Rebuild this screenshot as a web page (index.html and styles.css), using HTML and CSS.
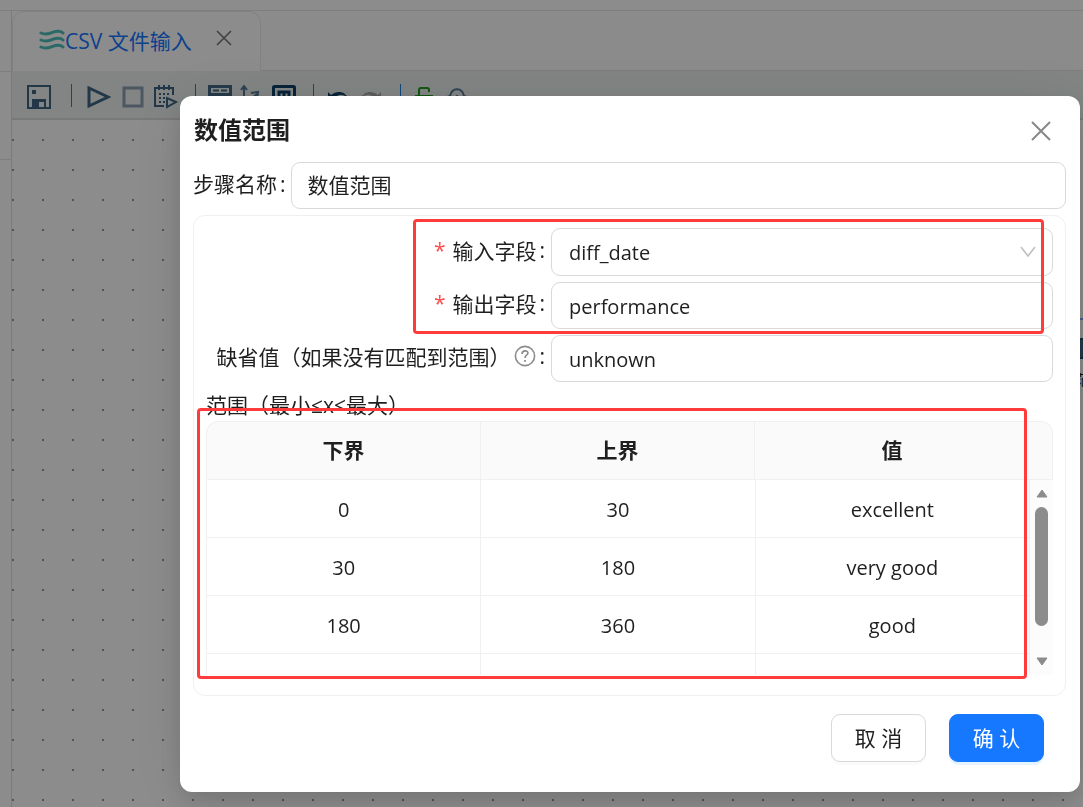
FILE: index.html
```html
<!DOCTYPE html>
<html lang="zh-CN">
<head>
  <meta charset="UTF-8">
  <meta name="viewport" content="width=device-width, initial-scale=1.0">
  <title>数值范围</title>
  <link rel="stylesheet" href="styles.css">
</head>
<body>
  <div class="page">
    <div class="topbar"></div>
    <div class="workspace">
      <aside class="sidebar">
        <div class="side-head"></div>
        <div class="side-item"></div>
      </aside>
      <main class="editor">
        <div class="tabs">
          <div class="tab">
            <svg width="26" height="22" viewBox="0 0 26 22" fill="none" stroke="#4ebfb9" stroke-width="3" stroke-linecap="round"><path d="M2 4c4 2 7 1 10 0s8-4 12 0M2 11c4 2 7 1 10 0s8-4 12 0M2 18c4 2 7 1 10 0s8-4 12 0"/></svg>
            <a href="#">CSV 文件输入</a>
            <button class="tab-close" aria-label="关闭标签"><svg width="16" height="16" viewBox="0 0 16 16" stroke="#777" stroke-width="1.6"><path d="M1 1l14 14M15 1L1 15"/></svg></button>
          </div>
          <div class="tabs-rest"></div>
        </div>
        <div class="toolbar">
          <button aria-label="保存"><svg width="24" height="24" viewBox="0 0 24 24"><path fill="#3e6684" fill-rule="evenodd" d="M0 0h24v24H0zM2 2v20h3v-8h14v8h3V2zM12 17v5h5v-5zM5 5h4v4H5z"/></svg></button>
          <i class="sep sep-first"></i>
          <button class="run" aria-label="运行"><svg width="24" height="24" viewBox="0 0 24 24" fill="none" stroke="#3e6684" stroke-width="3"><path d="M2 3v18l19-9z"/></svg></button>
          <button class="stop" aria-label="停止"><svg width="22" height="22" viewBox="0 0 22 22" fill="none" stroke="#8a9fb2" stroke-width="3"><path d="M2 2h18v18H2z"/></svg></button>
          <button class="plan" aria-label="调度"><svg width="24" height="24" viewBox="0 0 24 24" fill="none" stroke="#3e6684" stroke-width="2"><path d="M10 21H1V3h18v7M5 0v5M10 0v5M15 0v5"/><path d="M5 9h2m2 0h2m2 0h2M5 13h2m2 0h2M5 17h2m2 0h2"/><path d="M13 13v9l9-5z"/></svg></button>
          <i class="sep"></i>
          <button class="align" aria-label="对齐"><svg width="24" height="24" viewBox="0 0 24 24" fill="none" stroke="#456a88" stroke-width="3"><path d="M1.500 1.500h21v8h-21zM1.500 14.500h21v8h-21z"/><path d="M5 5.500h6M13 5.500h6" stroke-width="2"/></svg></button>
          <button class="route" aria-label="连线"><svg width="24" height="24" viewBox="0 0 24 24" fill="none" stroke="#56799a" stroke-width="2"><path d="M4 2v20M1 5l3-4 3 4M4 20l13-11M11 8l7-1-1 7"/></svg></button>
          <button class="map" aria-label="缩略图"><svg width="24" height="24" viewBox="0 0 24 24" fill="none" stroke="#0f4168" stroke-width="3"><rect x="1.500" y="1.500" width="21" height="21" rx="1"/><path d="M7 18V7h10v11M12 7v9"/></svg></button>
          <i class="sep"></i>
          <button class="undo" aria-label="撤销"><svg width="24" height="24" viewBox="0 0 24 24" fill="#0f4168"><path d="M2 7l3 3c6-5 14-4 17 3-5-4-9-4-12-1l3 4H2z"/></svg></button>
          <button class="redo" aria-label="重做"><svg width="24" height="24" viewBox="0 0 24 24" fill="#aaa"><path d="M22 7l-3 3C13 5 5 6 2 13c5-4 9-4 12-1l-3 4h11z"/></svg></button>
          <i class="sep"></i>
          <button class="unlock" aria-label="解锁"><svg width="24" height="24" viewBox="0 0 24 24" fill="none" stroke="#20a020" stroke-width="2"><path d="M3 11h16v11H3zM6 11V5q0-2 2-2h6q2 0 2 2v2"/></svg></button>
          <button class="cloud" aria-label="上传"><svg width="26" height="24" viewBox="0 0 26 24" fill="none" stroke="#56799a" stroke-width="2"><path d="M7 21H5c-5-1-5-9 1-10C8 2 18 2 20 11c6 1 6 9 1 10h-2M13 22V11M9 15l4-4 4 4"/></svg></button>
        </div>
        <div class="canvas">
          <div class="node"><i class="node-icon"></i><span>范围</span></div>
        </div>
      </main>
    </div>
  </div>

  <div class="mask">
    <form class="modal" role="dialog" aria-labelledby="title" onsubmit="return false">
      <header class="modal-head">
        <h1 id="title">数值范围</h1>
        <button type="button" class="modal-close" aria-label="关闭"><svg width="20" height="20" viewBox="0 0 20 20" stroke="#888" stroke-width="2"><path d="M1 1l18 18M19 1L1 19"/></svg></button>
      </header>
      <div class="name-row">
        <label for="stepName">步骤名称<span class="colon">:</span></label>
        <input class="field" type="text" id="stepName" value="数值范围">
      </div>
      <section class="panel">
        <div class="form-grid">
          <label for="inField"><span class="req">*</span>输入字段<span class="colon">:</span></label>
          <div class="select-wrap">
            <select class="field" id="inField"><option>diff_date</option></select>
            <svg class="arrow" width="16" height="12" viewBox="0 0 16 12" fill="none" stroke="#bfbfbf" stroke-width="1.6"><path d="M1 1l7 9 7-9"/></svg>
          </div>
          <label for="outField"><span class="req">*</span>输出字段<span class="colon">:</span></label>
          <input class="field" type="text" id="outField" value="performance">
          <label for="defValue">缺省值（如果没有匹配到范围）
            <svg class="help" width="22" height="22" viewBox="0 0 22 22" fill="none" stroke="#8c8c8c" stroke-width="1.6"><circle cx="11" cy="11" r="9.600"/><path d="M8 9c0-4 6-4 6-1 0 2-3 2-3 5"/><path d="M11 15v2"/></svg><span class="colon">:</span></label>
          <input class="field" type="text" id="defValue" value="unknown">
        </div>
        <p class="range-title">范围（最小≤x&lt;最大）</p>
        <div class="range">
          <table class="range-head">
            <thead><tr><th>下界</th><th>上界</th><th>值</th><th class="gutter"></th></tr></thead>
          </table>
          <div class="range-body">
            <table>
              <tbody>
                <tr><td>0</td><td>30</td><td>excellent</td></tr>
                <tr><td>30</td><td>180</td><td>very good</td></tr>
                <tr><td>180</td><td>360</td><td>good</td></tr>
                <tr><td></td><td></td><td></td></tr>
              </tbody>
            </table>
            <div class="scrollbar">
              <svg width="12" height="9" viewBox="0 0 12 9" fill="#8c8c8c" stroke="#8c8c8c" stroke-linejoin="round"><path d="M6 1l5 7H1z"/></svg>
              <div class="thumb"></div>
              <svg class="down" width="12" height="9" viewBox="0 0 12 9" fill="#8c8c8c" stroke="#8c8c8c" stroke-linejoin="round"><path d="M6 8L1 1h10z"/></svg>
            </div>
          </div>
        </div>
        <div class="mark mark-fields"></div>
        <div class="mark mark-range"></div>
      </section>
      <footer class="modal-foot">
        <button type="button" class="btn">取 消</button>
        <button type="submit" class="btn btn-primary">确 认</button>
      </footer>
    </form>
  </div>
</body>
</html>
```
FILE: styles.css
```css
* {
  box-sizing: border-box;
}
body {
  margin: 0;
  font-family: "Open Sans", "Noto Sans CJK SC", sans-serif;
  font-size: 21px;
  color: #1f1f1f;
}
button, input, select {
  font: inherit;
  color: inherit;
}
button {
  padding: 0;
  border: none;
  background: none;
  cursor: pointer;
}
svg {
  display: block;
}

/* page behind the dialog */
.page {
  display: flex;
  flex-direction: column;
  height: 100vh;
  overflow: hidden;
}
.topbar {
  height: 11px;
  border-bottom: 1px solid #e6e6e6;
}
.workspace {
  display: flex;
  flex: 1;
}
.sidebar {
  width: 12px;
  border-right: 1px solid #e0e0e0;
}
.side-head {
  height: 61px;
  border-bottom: 1px solid #e6e6e6;
}
.side-item {
  height: 88px;
  border-bottom: 1px solid #e6e6e6;
}
.editor {
  display: flex;
  flex: 1;
  flex-direction: column;
}
.tabs {
  display: flex;
  height: 60px;
}
.tab {
  display: flex;
  align-items: center;
  width: 249px;
  padding: 0 0 4px 26px;
  border: 1px solid #ececec;
  border-bottom: none;
  border-radius: 12px 12px 0 0;
}
.tab a {
  color: #1677ff;
  text-decoration: none;
}
.tab-close {
  margin: 0 0 4px 24px;
}
.tabs-rest {
  flex: 1;
  border-bottom: 1px solid #e6e6e6;
  background: #fdfdfd;
}
.toolbar {
  display: flex;
  align-items: center;
  height: 49px;
  padding: 4px 0 0 15px;
  background: #edf3f1;
  border-bottom: 2px solid #ddd;
}
.sep {
  width: 1px;
  height: 23px;
  margin: 0 12px 3px 17px;
  background: #1c84e0;
}
.sep-first {
  margin: 0 15px 3px 20px;
}
.stop {
  margin-left: 11px;
}
.plan {
  margin-left: 10px;
}
.route, .map {
  margin-left: 8px;
}
.redo {
  margin-left: 9px;
}
.cloud {
  margin-left: 7px;
}
.canvas {
  position: relative;
  flex: 1;
  background: radial-gradient(circle, #999 1px, transparent 1px) 16px 5px / 30px 30px;
}
.node {
  position: absolute;
  top: 198px;
  left: 1064px;
  width: 80px;
  border-top: 2px solid #7fa8ff;
  font-size: 14px;
}
.node-icon {
  display: block;
  width: 24px;
  height: 21px;
  margin: 18px 0 10px;
  border: 2px solid #1c4a6c;
  background: #3e6684;
}

/* dialog */
.mask {
  position: fixed;
  inset: 0;
  padding: 96px 3px 15px 180px;
  background: rgba(0, 0, 0, 0.45);
}
.modal {
  padding: 14px 14px 14px 13px;
  border-radius: 12px;
  background: #fff;
  box-shadow: 0 9px 24px rgba(0, 0, 0, 0.12), 0 4px 60px rgba(0, 0, 0, 0.1);
}
.modal-head {
  display: flex;
  align-items: center;
  justify-content: space-between;
  height: 42px;
  padding: 0 15px 0 1px;
}
.modal-head h1 {
  margin: 0;
  padding-bottom: 5px;
  font-size: 24px;
}
.name-row {
  display: flex;
  align-items: center;
  gap: 5px;
  margin-top: 10px;
}
.name-row label {
  padding-bottom: 5px;
}
.colon {
  margin-left: 3px;
}
.field {
  width: 100%;
  height: 47px;
  padding: 0 16px;
  border: 1px solid #d9d9d9;
  border-radius: 9px;
  background: #fff;
  font-size: 20px;
}
.name-row .field {
  flex: 1;
  width: auto;
  padding-bottom: 3px;
  font-size: 21px;
}
.panel {
  position: relative;
  margin-top: 6px;
  padding: 12px 12px 20px;
  border: 1px solid #f0f0f0;
  border-radius: 12px;
}
.form-grid {
  display: grid;
  grid-template-columns: 339px 1fr;
  gap: 6px;
  align-items: center;
}
.form-grid label {
  display: flex;
  align-items: center;
  justify-content: flex-end;
  padding-bottom: 5px;
  white-space: nowrap;
}
.form-grid .field {
  padding: 1px 17px 0;
}
.req {
  margin-right: 7px;
  color: #ff4d4f;
}
.help {
  margin-left: 4px;
}
.select-wrap {
  position: relative;
}
.select-wrap .field {
  display: block;
  height: 48px;
  appearance: none;
}
.arrow {
  position: absolute;
  top: 18px;
  right: 17px;
  pointer-events: none;
}
.range-title {
  margin: 8px 0 0;
  line-height: 31px;
}
.range-head, .range-body table {
  width: 100%;
  table-layout: fixed;
  border-collapse: separate;
  border-spacing: 0;
  text-align: center;
}
.range-head {
  border: 1px solid #f0f0f0;
  border-radius: 12px 12px 0 0;
  background: #fafafa;
}
.range-head th {
  height: 57px;
  padding: 0 0 3px;
  border-right: 1px solid #f0f0f0;
}
.range-head th:nth-child(3), .range-head .gutter {
  border-right: none;
}
.range-head .gutter {
  width: 23px;
}
.range-body {
  display: flex;
  height: 195px;
  overflow: hidden;
  border-left: 1px solid #f0f0f0;
}
.range-body table {
  flex: 1;
  align-self: flex-start;
}
.range-body td {
  height: 58px;
  padding: 2px 0 0;
  border-right: 1px solid #f0f0f0;
  border-bottom: 1px solid #f0f0f0;
  font-size: 20px;
}
.scrollbar {
  display: flex;
  flex-direction: column;
  align-items: center;
  width: 23px;
  padding: 9px 0;
  background: #fcfcfc;
}
.thumb {
  width: 13px;
  height: 119px;
  margin-top: 9px;
  border-radius: 7px;
  background: #8c8c8c;
}
.scrollbar .down {
  margin-top: auto;
}
.mark {
  position: absolute;
  border: 3px solid #ff3b3b;
  border-radius: 4px;
  pointer-events: none;
}
.mark-fields {
  top: 3px;
  right: 21px;
  left: 219px;
  height: 115px;
}
.mark-range {
  top: 192px;
  right: 38px;
  bottom: 16px;
  left: 3px;
}
.modal-foot {
  display: flex;
  justify-content: flex-end;
  gap: 23px;
  padding: 18px 22px 16px;
}
.btn {
  width: 95px;
  height: 48px;
  padding-bottom: 3px;
  border: 1px solid #d9d9d9;
  border-radius: 9px;
  background: #fff;
  box-shadow: 0 3px 0 rgba(0, 0, 0, 0.02);
}
.btn-primary {
  border-color: #1677ff;
  background: #1677ff;
  box-shadow: 0 3px 0 rgba(5, 145, 255, 0.1);
  color: #fff;
}
```
